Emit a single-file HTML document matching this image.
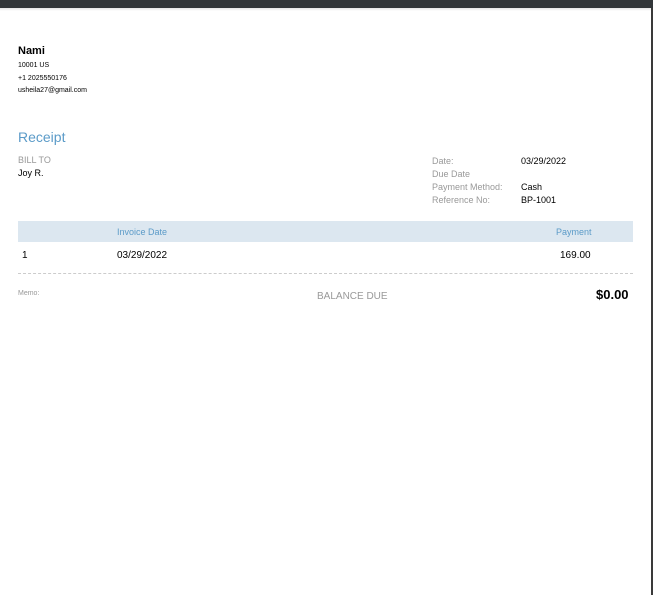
<!DOCTYPE html>
<html><head><style>
*{margin:0;padding:0;box-sizing:border-box}
body{width:653px;height:595px;background:#fff;font-family:"Liberation Sans",Arial,sans-serif;position:relative;overflow:hidden;color:#000}
.a{position:absolute;white-space:nowrap}
.g{color:#999}
</style></head><body>
<div class="a" style="left:0;top:0;width:653px;height:8px;background:#323639"></div>
<div class="a" style="left:0;top:8px;width:653px;height:3px;background:linear-gradient(#e4e4e4,#fff)"></div>
<div class="a" style="left:651px;top:8px;width:2px;height:587px;background:#3a3a3a"></div>
<div class="a" style="left:18px;top:45px;font-size:11px;font-weight:bold">Nami</div>
<div class="a" style="left:18px;top:62px;font-size:7px">10001 US</div>
<div class="a" style="left:18px;top:75px;font-size:7px">+1 2025550176</div>
<div class="a" style="left:18px;top:87px;font-size:7px">usheila27@gmail.com</div>
<div class="a" style="left:18px;top:129px;font-size:14px;color:#5b9bc8">Receipt</div>
<div class="a g" style="left:18px;top:155px;font-size:9px">BILL TO</div>
<div class="a" style="left:18px;top:168px;font-size:9px">Joy R.</div>
<div class="a g" style="left:432px;top:155px;font-size:9px;line-height:13px">Date:<br>Due Date<br>Payment Method:<br>Reference No:</div>
<div class="a" style="left:521px;top:155px;font-size:9px;line-height:13px">03/29/2022<br><br>Cash<br>BP-1001</div>
<div class="a" style="left:18px;top:221px;width:615px;height:21px;background:#dce7f0"></div>
<div class="a" style="left:117px;top:227px;font-size:9px;color:#5b9bc8">Invoice Date</div>
<div class="a" style="left:556px;top:227px;font-size:9px;color:#5b9bc8">Payment</div>
<div class="a" style="left:22px;top:250px;font-size:10px">1</div>
<div class="a" style="left:117px;top:250px;font-size:10px">03/29/2022</div>
<div class="a" style="left:560px;top:250px;font-size:10px">169.00</div>
<div class="a" style="left:18px;top:273px;width:615px;border-top:1px dashed #ccc"></div>
<div class="a g" style="left:18px;top:290px;font-size:7px">Memo:</div>
<div class="a g" style="left:317px;top:291px;font-size:10px">BALANCE DUE</div>
<div class="a" style="left:596px;top:287px;font-size:13px;font-weight:bold">$0.00</div>
</body></html>
